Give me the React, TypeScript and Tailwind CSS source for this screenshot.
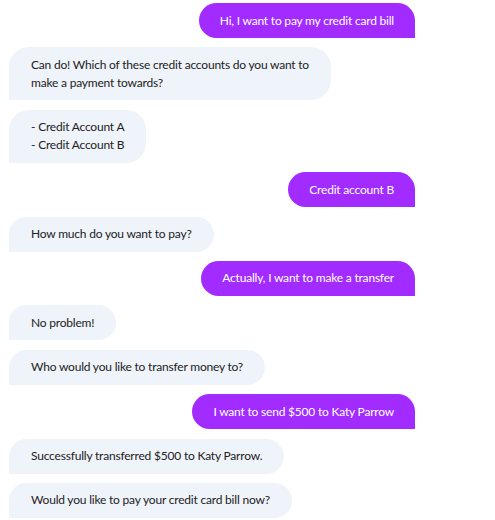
const messages: { from: 'user' | 'bot'; lines: string[] }[] = [
  { from: 'user', lines: ['Hi, I want to pay my credit card bill'] },
  { from: 'bot', lines: ['Can do! Which of these credit accounts do you want to', 'make a payment towards?'] },
  { from: 'bot', lines: ['- Credit Account A', '- Credit Account B'] },
  { from: 'user', lines: ['Credit account B'] },
  { from: 'bot', lines: ['How much do you want to pay?'] },
  { from: 'user', lines: ['Actually, I want to make a transfer'] },
  { from: 'bot', lines: ['No problem!'] },
  { from: 'bot', lines: ['Who would you like to transfer money to?'] },
  { from: 'user', lines: ['I want to send $500 to Katy Parrow'] },
  { from: 'bot', lines: ['Successfully transferred $500 to Katy Parrow.'] },
  { from: 'bot', lines: ['Would you like to pay your credit card bill now?'] },
];

export default function App() {
  return (
    <div className="h-[520px] w-[495px] overflow-hidden bg-white font-['Lato',sans-serif]">
      <div className="flex w-[415px] flex-col gap-[9.4px] pl-[9px] pt-[3px]">
        {messages.map((m, i) => (
          <div
            key={i}
            className={
              m.from === 'user'
                ? 'self-end rounded-[18px] rounded-br-none bg-[#a22cff] px-[21px] py-[8.5px] text-[12px] leading-[18px] tracking-[-0.2px] text-white'
                : 'self-start rounded-[20px] rounded-bl-none bg-[#eff3fa] px-[22px] py-[8.5px] text-[12px] leading-[18px] tracking-[-0.2px] text-[#222]'
            }
          >
            {m.lines.map((l, j) => (
              <div key={j} className="whitespace-nowrap">
                {l}
              </div>
            ))}
          </div>
        ))}
      </div>
    </div>
  );
}
